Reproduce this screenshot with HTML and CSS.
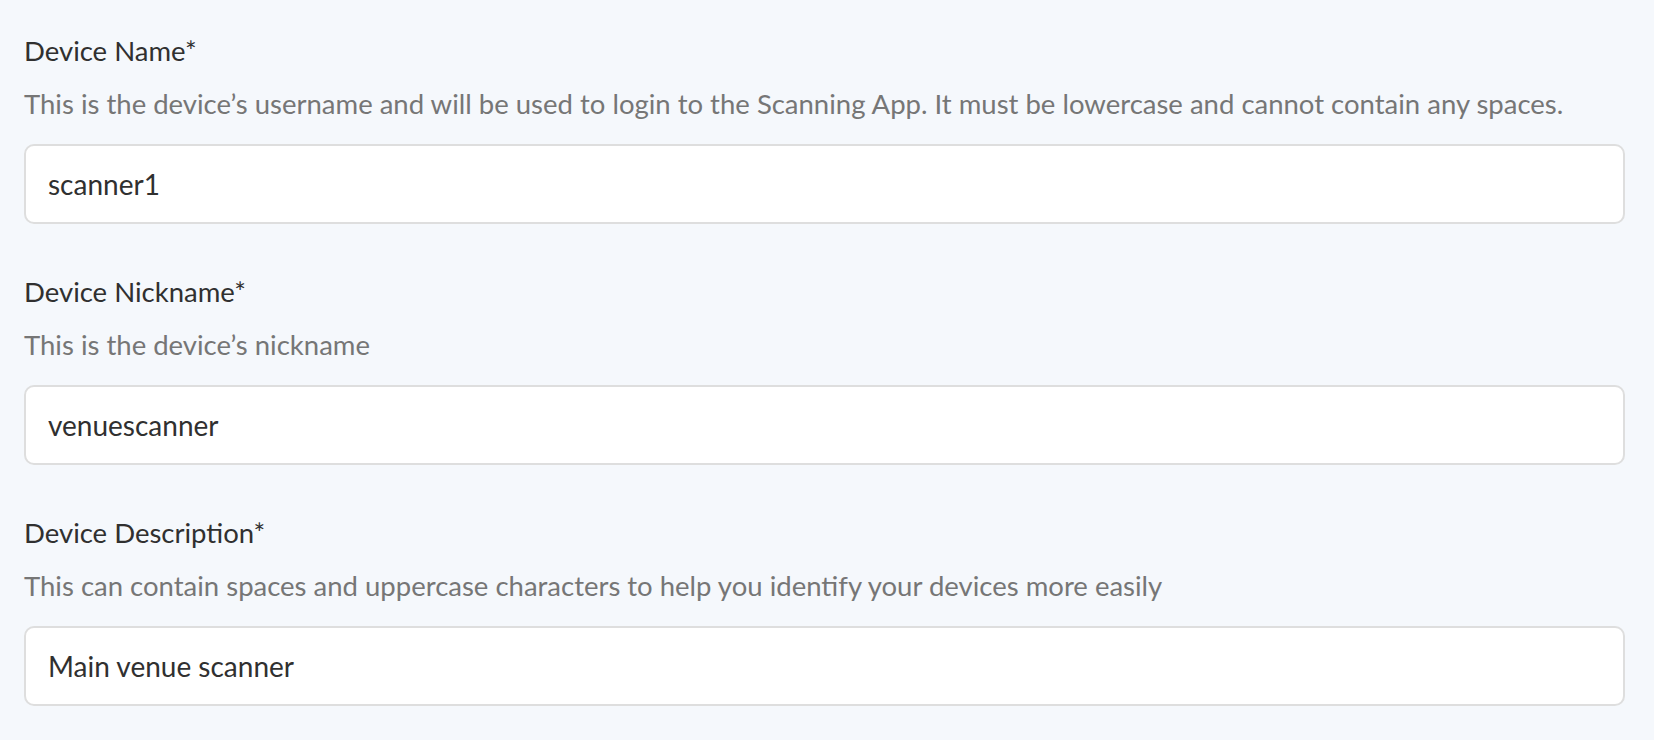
FILE: index.html
```html
<!DOCTYPE html>
<html lang="en">
<head>
<meta charset="utf-8">
<title>Device</title>
<link rel="stylesheet" href="styles.css">
</head>
<body>
<form class="form">
  <div class="field">
    <label class="label" for="name">Device Name*</label>
    <p class="help">This is the device’s username and will be used to login to the Scanning App. It must be lowercase and cannot contain any spaces.</p>
    <input class="input" id="name" type="text" value="scanner1">
  </div>
  <div class="field">
    <label class="label" for="nick">Device Nickname*</label>
    <p class="help">This is the device’s nickname</p>
    <input class="input" id="nick" type="text" value="venuescanner">
  </div>
  <div class="field">
    <label class="label" for="desc">Device Description*</label>
    <p class="help">This can contain spaces and uppercase characters to help you identify your devices more easily</p>
    <input class="input" id="desc" type="text" value="Main venue scanner">
  </div>
</form>
</body>
</html>
```
FILE: styles.css
```css
html, body {
  margin: 0;
  padding: 0;
  background: #f5f8fc;
}
body {
  font-family: Lato, "Open Sans", sans-serif;
}
.form {
  display: flex;
  flex-direction: column;
  gap: 50px;
  padding: 33px 29px 0 24px;
}
.field {
  display: flex;
  flex-direction: column;
}
.label {
  font-size: 27.5px;
  line-height: 36px;
  color: #303030;
}
.help {
  margin: 17px 0 22px;
  font-size: 27.5px;
  line-height: 36px;
  color: #767676;
}
.input {
  box-sizing: border-box;
  height: 80px;
  width: 100%;
  padding: 0 22px;
  border: 2px solid #dedede;
  border-radius: 10px;
  background: #fff;
  font-family: Lato, "Open Sans", sans-serif;
  font-size: 28px;
  color: #303030;
  outline: none;
}
```
